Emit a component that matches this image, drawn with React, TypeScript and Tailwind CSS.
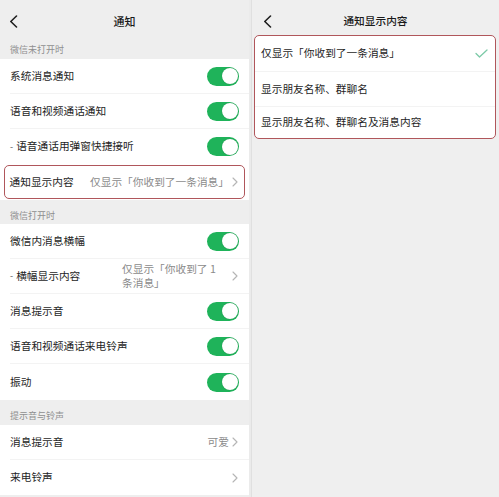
import React from "react";

const FONT = { fontFamily: '"Noto Sans CJK SC", "Noto Sans", sans-serif' };

function Back() {
  return (
    <svg width="9" height="13" viewBox="0 0 9 13" fill="none">
      <polyline points="7.5,1 1.8,6.5 7.5,12" stroke="#1f1f1f" strokeWidth="1.6" strokeLinecap="round" strokeLinejoin="round" />
    </svg>
  );
}

function Chevron() {
  return (
    <svg width="6" height="10" viewBox="0 0 6 10" fill="none" className="shrink-0">
      <polyline points="1,1 5,5 1,9" stroke="#b5b5b5" strokeWidth="1.1" strokeLinecap="round" strokeLinejoin="round" />
    </svg>
  );
}

function Toggle() {
  return (
    <div className="w-[32px] h-[19px] rounded-full bg-[#1fb35a] flex items-center justify-end pr-[1.5px] shrink-0">
      <div className="w-[16px] h-[16px] rounded-full bg-white shadow-[0_0_1px_rgba(0,0,0,0.3)]" />
    </div>
  );
}

function Label({ text, h, pt }: { text: string; h: string; pt: string }) {
  return (
    <div className={`${h} ${pt} pl-[10px] text-[9px] leading-[12px] text-[#8e8e8e]`}>{text}</div>
  );
}

function Row({
  label,
  dash,
  right,
  last,
  h = "h-[35px]",
}: {
  label: string;
  dash?: boolean;
  right: React.ReactNode;
  last?: boolean;
  h?: string;
}) {
  return (
    <div className={`${h} pl-[10px] bg-white`}>
      <div className={`h-full flex items-center pr-[10px] ${last ? "" : "border-b border-[#f3f3f3]"}`}>
        <div className="flex-1 flex items-center text-[10.7px] text-[#1e1e1e] whitespace-nowrap">
          {dash && <span className="text-[#555] mr-[3px] text-[9px]">-</span>}
          {label}
        </div>
        {right}
      </div>
    </div>
  );
}

function ValueRight({ text }: { text: string }) {
  return (
    <div className="flex items-center gap-[3px] pr-[1px]">
      <span className="text-[10.7px] text-[#8a8a8a] whitespace-nowrap">{text}</span>
      <Chevron />
    </div>
  );
}

export default function App() {
  return (
    <div className="w-[499px] h-[497px] flex bg-[#eeeeee] overflow-hidden" style={FONT}>
      {/* Left panel */}
      <div className="w-[249px] flex flex-col">
        <div className="h-[42px] grid grid-cols-[40px_1fr_40px] items-center">
          <div className="pl-[9px] flex items-center">
            <Back />
          </div>
          <div className="text-center text-[11px] font-medium text-[#1a1a1a]">通知</div>
          <div />
        </div>
        <Label text="微信未打开时" h="h-[17px]" pt="pt-[2px]" />
        <Row label="系统消息通知" right={<Toggle />} />
        <Row label="语音和视频通话通知" right={<Toggle />} />
        <Row label="语音通话用弹窗快捷接听" dash right={<Toggle />} last />
        <div className="h-[36px] bg-white px-[4px] py-[1px]">
          <div className="h-full border-[1.5px] border-[#b0565b] rounded-[5px] flex items-center pl-[4.5px] pr-[5px]">
            <div className="flex-1 text-[10.7px] text-[#1e1e1e] whitespace-nowrap">通知显示内容</div>
            <ValueRight text="仅显示「你收到了一条消息」" />
          </div>
        </div>
        <Label text="微信打开时" h="h-[24px]" pt="pt-[10px]" />
        <Row label="微信内消息横幅" right={<Toggle />} />
        <Row
          label="横幅显示内容"
          dash
          right={
            <div className="flex items-center gap-[10px] pr-[1px]">
              <div className="w-[100px] text-[10.7px] leading-[14px] text-[#8a8a8a]">
                仅显示「你收到了 1<br />条消息」
              </div>
              <Chevron />
            </div>
          }
        />
        <Row label="消息提示音" right={<Toggle />} />
        <Row label="语音和视频通话来电铃声" right={<Toggle />} />
        <Row label="振动" right={<Toggle />} last h="h-[36px]" />
        <Label text="提示音与铃声" h="h-[25px]" pt="pt-[10px]" />
        <Row label="消息提示音" right={<ValueRight text="可爱" />} />
        <Row label="来电铃声" right={<div className="pr-[1px]"><Chevron /></div>} last />
      </div>

      {/* divider */}
      <div className="w-[3px] bg-[#ebebeb] border-r border-[#e0e0e0]" />

      {/* Right panel */}
      <div className="flex-1 flex flex-col bg-[#efefef]">
        <div className="h-[35px] pt-[7px] grid grid-cols-[40px_1fr_40px] items-center">
          <div className="pl-[11px] flex items-center">
            <Back />
          </div>
          <div className="text-center text-[10.7px] font-medium text-[#1a1a1a]">通知显示内容</div>
          <div />
        </div>
        <div className="ml-[2px] mr-[3px] h-[104px] border-[1.5px] border-[#b0565b] rounded-[5px] bg-white flex flex-col overflow-hidden">
          <div className="h-[36px] flex items-center pl-[6px] pr-[7px] border-b border-[#f3f3f3]">
            <div className="flex-1 text-[10.7px] text-[#1e1e1e] whitespace-nowrap">仅显示「你收到了一条消息」</div>
            <svg width="13" height="9" viewBox="0 0 13 9" fill="none">
              <polyline points="1,4.5 4.5,8 12,1" stroke="#7dcaa8" strokeWidth="1.3" strokeLinecap="round" strokeLinejoin="round" />
            </svg>
          </div>
          <div className="h-[35px] flex items-center pl-[6px] border-b border-[#f3f3f3]">
            <div className="text-[10.7px] text-[#1e1e1e] whitespace-nowrap">显示朋友名称、群聊名</div>
          </div>
          <div className="flex-1 flex items-center pl-[6px]">
            <div className="text-[10.7px] text-[#1e1e1e] whitespace-nowrap">显示朋友名称、群聊名及消息内容</div>
          </div>
        </div>
      </div>
    </div>
  );
}
